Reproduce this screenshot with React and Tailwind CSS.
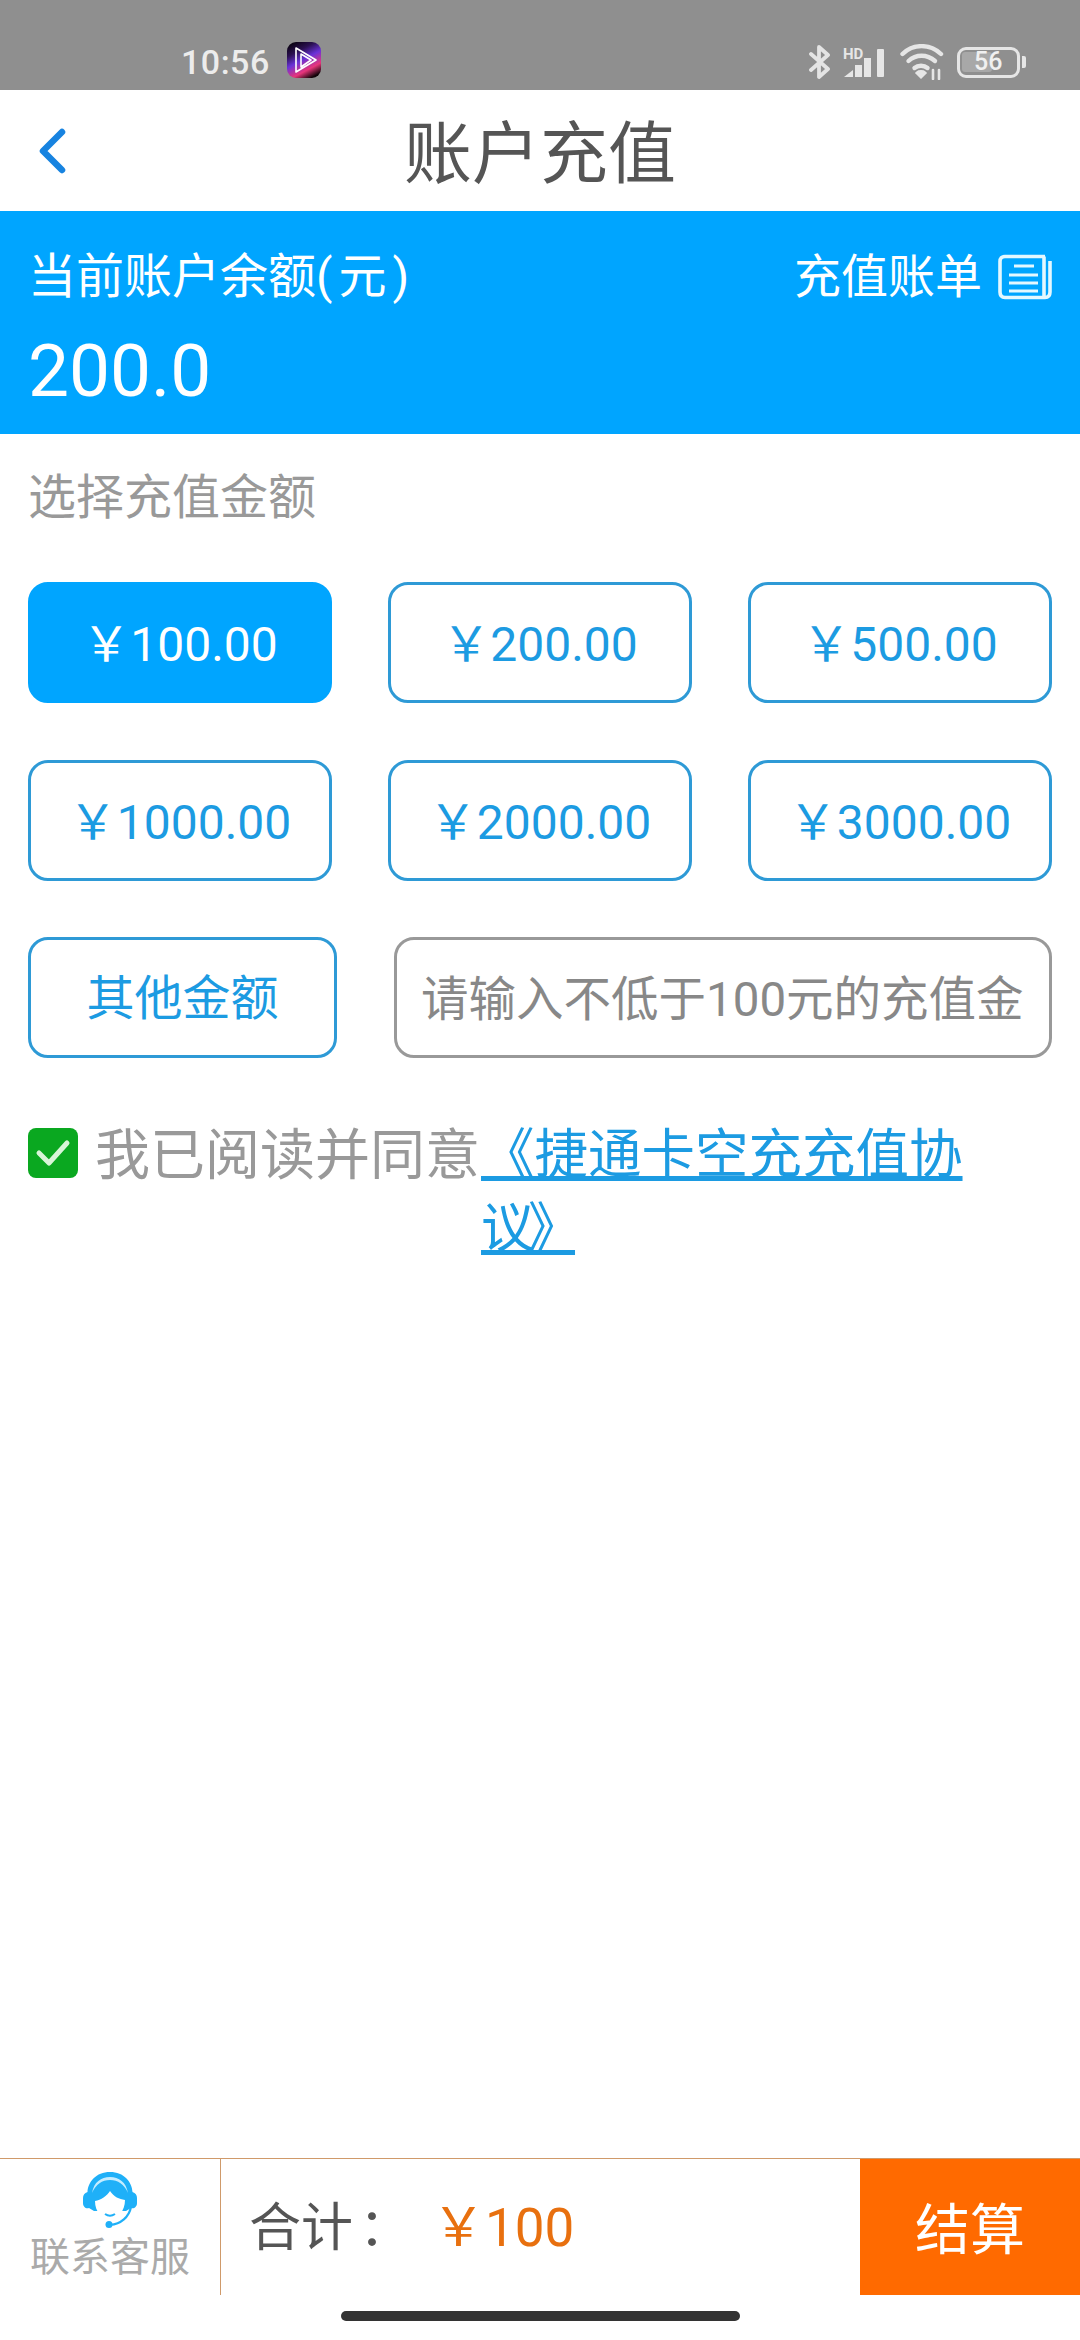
const sans = "font-['Roboto','Noto_Sans_CJK_SC',sans-serif]";

function Amount({ label, active }) {
  return (
    <div
      className={
        "h-[121px] flex items-center justify-center rounded-[20px] border-[3px] text-[48px] pt-[4px] " +
        (active
          ? "bg-[#00a5ff] border-[#00a5ff] text-white"
          : "bg-white border-[#2e9ad6] text-[#1c9be2]")
      }
    >
      {label}
    </div>
  );
}

function StatusIcons() {
  return (
    <div className="flex items-center ml-auto mr-[54px] h-[40px]">
      <svg width="22" height="36" viewBox="0 0 22 36" fill="none" stroke="#e4e4e4" strokeWidth="3.8" strokeLinejoin="round" strokeLinecap="round">
        <path d="M2 10 L19 25 L10 33 V3 L19 11 L2 26" />
      </svg>
      <svg className="ml-[12px]" width="42" height="36" viewBox="0 -4 42 36">
        <text x="0" y="11" fontSize="15" fontWeight="700" fill="#e6e6e6" fontFamily="Roboto, sans-serif">HD</text>
        <path d="M1 29 L10 22 V29 Z" fill="#e6e6e6" />
        <rect x="12" y="17" width="7" height="12" fill="#e6e6e6" />
        <rect x="21" y="10" width="7" height="19" fill="#e6e6e6" />
        <rect x="34" y="1" width="7" height="28" rx="1" fill="#e6e6e6" />
      </svg>
      <svg className="ml-[15px]" width="44" height="36" viewBox="0 0 44 36" fill="none" stroke="#e6e6e6" strokeWidth="4.4" strokeLinecap="round">
        <path d="M2.5 10 C13 -0.5 30 -0.5 41 10" />
        <path d="M8.5 17 C16 10 27 10 35 17" />
        <path d="M14.5 24 C18 21 24 21 27.5 24" />
        <path d="M18 29 L21 32 L24 29 C23 28 19 28 18 29 Z" fill="#e6e6e6" />
        <path d="M33 26 V35 M39 26 V35" strokeWidth="2.6" />
      </svg>
      <div className="ml-[13px] w-[63px] h-[31px] rounded-[9px] border-[3.5px] border-[#e6e6e6] relative flex items-center overflow-hidden">
        <div className="w-[30px] h-[20px] bg-[#a8a8a8] rounded-[3px] ml-[2px]" />
        <span className={"absolute left-[14px] top-[-3px] text-[25px] font-medium leading-[30px] text-[#f0f0f0] " + sans}>56</span>
      </div>
      <div className="ml-[2px] w-[4px] h-[12px] bg-[#e6e6e6] rounded-r-[2px]" />
    </div>
  );
}

export default function App() {
  return (
    <div className={"w-[1080px] h-[2340px] bg-white flex flex-col overflow-hidden " + sans}>
      <div className="h-[90px] bg-[#8f8f8f] flex items-start pt-[42px]">
        <span className="ml-[181px] text-[34px] leading-[40px] font-medium text-[#ececec] tracking-[0.5px]">10:56</span>
        <svg className="ml-[17px]" width="34" height="36" viewBox="0 0 34 36">
          <defs>
            <linearGradient id="g" x1="0.2" y1="0" x2="0.7" y2="1">
              <stop offset="0" stopColor="#0a0210" />
              <stop offset="0.25" stopColor="#2a1050" />
              <stop offset="0.5" stopColor="#6a32d8" />
              <stop offset="0.78" stopColor="#e8357a" />
              <stop offset="1" stopColor="#100308" />
            </linearGradient>
          </defs>
          <rect width="34" height="36" rx="9" fill="url(#g)" />
          <path d="M9 6 L29 18 L9 30 Z M14 12 L24 18 L14 25 Z" fill="none" stroke="#fff" strokeWidth="1.6" strokeLinejoin="round" />
        </svg>
        <StatusIcons />
      </div>

      <div className="h-[121px] flex items-center relative">
        <svg className="ml-[36px]" width="34" height="48" viewBox="0 0 34 48" fill="none" stroke="#1783e0" strokeWidth="6.5" strokeLinecap="round" strokeLinejoin="round">
          <path d="M26 5 L7 24 L26 43" />
        </svg>
        <div className="absolute inset-x-0 top-[20px] text-center text-[68px] leading-[90px] text-[#555555]">账户充值</div>
      </div>

      <div className="h-[223px] bg-[#00a5ff] pl-[28px] pr-[28px] pt-[36px] text-white">
        <div className="flex items-center justify-between h-[60px]">
          <span className="text-[48px] leading-[60px]">当前账户余额(<span className="mx-[6px]">元</span>)</span>
          <div className="flex items-center">
            <span className="text-[47px] leading-[60px]">充值账单</span>
            <svg className="ml-[16px]" width="54" height="46" viewBox="0 0 54 46" fill="none" stroke="#e4f8ff" strokeWidth="3.6">
              <path d="M47 2.5 H7 Q2 2.5 2 7.5 V38 Q2 43.5 7 43.5 H47 Q52 43.5 52 38 V7" strokeLinejoin="round" />
              <path d="M46 2.5 V43" />
              <path d="M16 12 H36 M11 21 H40 M11 29 H40 M11 37 H40" strokeWidth="3" />
            </svg>
          </div>
        </div>
        <div className="text-[73px] leading-[80px] mt-[24px]">200.0</div>
      </div>

      <div className="px-[28px]">
        <div className="text-[48px] leading-[60px] text-[#999999] mt-[34px]">选择充值金额</div>
        <div className="grid grid-cols-3 gap-x-[56px] gap-y-[57px] mt-[54px]">
          <Amount label="￥100.00" active />
          <Amount label="￥200.00" />
          <Amount label="￥500.00" />
          <Amount label="￥1000.00" />
          <Amount label="￥2000.00" />
          <Amount label="￥3000.00" />
        </div>
        <div className="flex gap-[57px] mt-[56px]">
          <div className="w-[309px] shrink-0 h-[121px] flex items-center justify-center rounded-[20px] border-[3px] border-[#2e9ad6] text-[48px] pt-[2px] text-[#1c9be2]">其他金额</div>
          <input
            readOnly
            placeholder="请输入不低于100元的充值金额"
            className="flex-1 min-w-0 h-[121px] rounded-[20px] border-[3px] border-[#999999] pl-[24px] pr-[26px] pt-[5px] text-[47.5px] text-[#888888] placeholder:text-[#888888] outline-none"
          />
        </div>
        <div className="flex items-start mt-[60px]">
          <div className="w-[50px] h-[50px] mt-[10px] shrink-0 rounded-[8px] bg-[#0aa820] flex items-center justify-center">
            <svg width="40" height="34" viewBox="0 0 40 34" fill="none" stroke="#d8f5d8" strokeWidth="5" strokeLinecap="round" strokeLinejoin="round">
              <path d="M6 17 L16 27 L34 7" />
            </svg>
          </div>
          <span className="ml-[17px] shrink-0 text-[55px] leading-[74px] text-[#999999]">我已阅读并同意</span>
          <span className="ml-[1px] w-[490px] text-[53.5px] leading-[74px] text-[#1c9be2] underline">
            《捷通卡空充充值协<span className="tracking-[-6.5px]">议》</span>
          </span>
        </div>
      </div>

      <div className="mt-auto h-[137px] border-t-[1.5px] border-[#cf9a6a] flex shrink-0">
        <div className="w-[221px] shrink-0 border-r-[1.5px] border-[#cf9a6a] flex flex-col items-center pt-[13px]">
          <svg width="54" height="56" viewBox="0 0 54 56">
            <path d="M27 0 C13 0 5 10 4.5 20 C1.5 21 0 23 0 26 V31 C0 35 3 37 6 36 L11 39 H43 L48 36 C51 37 54 35 54 31 V26 C54 23 52.5 21 49.5 20 C49 10 41 0 27 0 Z" fill="#1fb0f8" />
            <path d="M9 21 C11 10 18 5 27 5 C36 5 43 10 45 21 C41 12 35 8 27 8 C19 8 13 12 9 21 Z" fill="#c4ecff" />
            <path d="M12 29 C18 28 24 24 27 19 C31 25 36 27 42 28 C42 39 35 47 27 47 C19 47 12 40 12 29 Z" fill="#fff" />
            <path d="M22 42 C25 44 29 44 32 42" stroke="#1fb0f8" strokeWidth="2" fill="none" />
            <path d="M48 35 C46 45 38 52 27 53" stroke="#1fb0f8" strokeWidth="2.2" fill="none" />
            <circle cx="26" cy="52.5" r="3.5" fill="#1fb0f8" />
          </svg>
          <span className="text-[40px] leading-[46px] text-[#aaaaaa] mt-[7px]">联系客服</span>
        </div>
        <div className="flex-1 flex items-center pl-[28px] pt-[4px]">
          <span className="text-[52px] text-[#555555]">合计<span className="ml-[6px]">：</span></span>
          <span className="ml-[21px] text-[53px] text-[#e8700f]">￥100</span>
        </div>
        <div className="w-[220px] shrink-0 bg-[#ff6a00] flex items-center justify-center text-[55px] text-white pt-[6px]">结算</div>
      </div>
      <div className="h-[45px] shrink-0 flex justify-center pt-[16px]">
        <div className="w-[399px] h-[10px] rounded-full bg-[#333333]" />
      </div>
    </div>
  );
}
